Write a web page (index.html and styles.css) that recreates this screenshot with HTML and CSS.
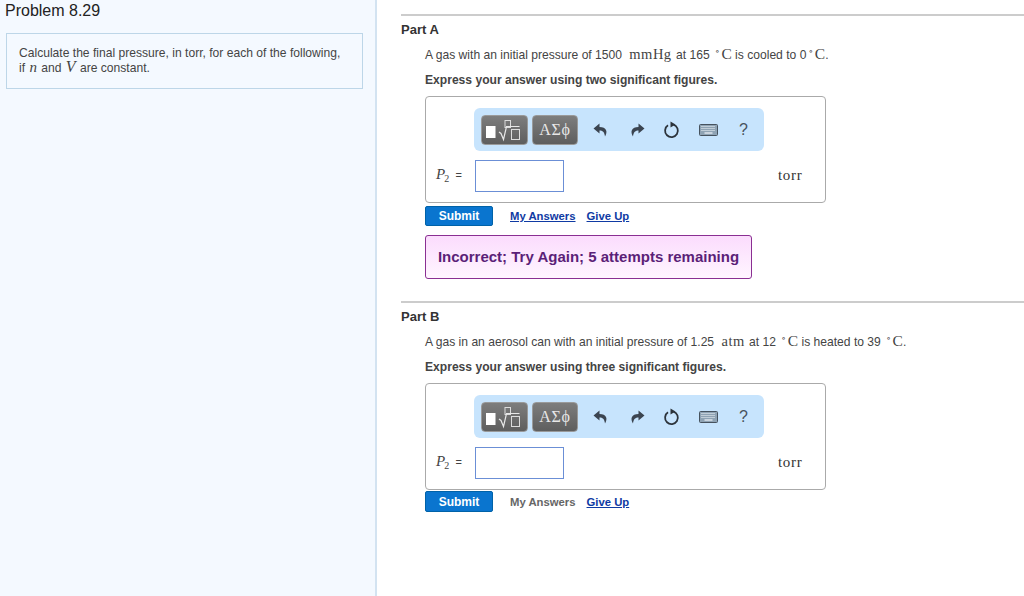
FILE: index.html

```html
<!DOCTYPE html>
<html lang="en">
<head>
  <meta charset="UTF-8" />
  <title>Problem 8.29</title>
  <link rel="stylesheet" href="styles.css">
</head>
<body>

  <div class="side">
    <h1>Problem 8.29</h1>
    <div class="intro">
      Calculate the final pressure, in torr, for each of the following,<br>
      if <span class="math it wide">n</span> and <span class="math it big">V</span> are constant.
    </div>
  </div>

  <div class="main">

    <div class="part part-a">
      <h2>Part A</h2>
      <div class="body">
        <p class="question">A gas with an initial pressure of 1500 <span class="math unit">mmHg</span> at 165 <span class="math deg"><sup>∘</sup>C</span> is cooled to 0<span class="math deg"><sup>∘</sup>C</span>.</p>
        <p class="hint">Express your answer using two significant figures.</p>
        <div class="answer">
          <div class="toolbar">
            <button class="tool tool-tpl" aria-label="Templates">
              <svg width="44" height="24" viewBox="0 0 44 24">
                <rect x="3" y="8" width="9.500" height="12" fill="#fff"/>
                <rect x="22" y="2.500" width="5.500" height="7" fill="none" stroke="#dcdcdc"/>
                <path d="M16 14l2 1.500 2.500 6 3-13h13" fill="none" stroke="#e8e8e8" stroke-width="1.200"/>
                <rect x="28.500" y="11.500" width="8" height="10" fill="none" stroke="#dcdcdc"/>
              </svg>
            </button>
            <button class="tool tool-sym">ΑΣϕ</button>
            <svg class="act act-undo" width="16" height="16" viewBox="0 0 16 16"><path d="M6.500 1.500L0.500 6.500l6 5V8.500c3 0 5 1.500 5.500 6 3-5 1.500-9.500-5.500-9.500z" fill="#3b4450"/></svg>
            <svg class="act act-redo" width="16" height="16" viewBox="0 0 16 16"><path d="M9.500 1.500l6 5-6 5V8.500c-3 0-5 1.500-5.500 6-3-5-1.500-9.500 5.500-9.500z" fill="#3b4450"/></svg>
            <svg class="act act-reset" width="18" height="18" viewBox="0 0 18 18"><path d="M10.500 3.600A6.400 6.400 0 1 1 5 4.300" fill="none" stroke="#2c333b" stroke-width="1.800"/><path d="M7.500 0.500l5 3-5 3z" fill="#2c333b"/></svg>
            <svg class="act act-keys" width="19" height="12" viewBox="0 0 19 12"><rect x="0.500" y="0.500" width="18" height="11" rx="1" fill="#8fa3b4" stroke="#46525e"/><path d="M2.500 2.500h14M2.500 4.500h14M2.500 6.500h14" stroke="#f2f6fa" stroke-dasharray="1 1"/><path d="M5.500 9h8" stroke="#f2f6fa" stroke-width="1.200"/></svg>
            <span class="act-help">?</span>
          </div>
          <div class="entry">
            <span class="label"><span class="math it">P</span><sub class="math">2</sub> <span class="eq">=</span></span>
            <div class="field"></div>
            <span class="math unit-end">torr</span>
          </div>
        </div>
        <div class="actions">
          <button class="submit">Submit</button>
          <a class="link first" href="#">My Answers</a>
          <a class="link" href="#">Give Up</a>
        </div>
        <div class="feedback">Incorrect; Try Again; 5 attempts remaining</div>
      </div>
    </div>

    <div class="part part-b">
      <h2>Part B</h2>
      <div class="body">
        <p class="question">A gas in an aerosol can with an initial pressure of 1.25 <span class="math unit">atm</span> at 12 <span class="math deg"><sup>∘</sup>C</span> is heated to 39 <span class="math deg"><sup>∘</sup>C</span>.</p>
        <p class="hint">Express your answer using three significant figures.</p>
        <div class="answer">
          <div class="toolbar">
            <button class="tool tool-tpl" aria-label="Templates">
              <svg width="44" height="24" viewBox="0 0 44 24">
                <rect x="3" y="8" width="9.500" height="12" fill="#fff"/>
                <rect x="22" y="2.500" width="5.500" height="7" fill="none" stroke="#dcdcdc"/>
                <path d="M16 14l2 1.500 2.500 6 3-13h13" fill="none" stroke="#e8e8e8" stroke-width="1.200"/>
                <rect x="28.500" y="11.500" width="8" height="10" fill="none" stroke="#dcdcdc"/>
              </svg>
            </button>
            <button class="tool tool-sym">ΑΣϕ</button>
            <svg class="act act-undo" width="16" height="16" viewBox="0 0 16 16"><path d="M6.500 1.500L0.500 6.500l6 5V8.500c3 0 5 1.500 5.500 6 3-5 1.500-9.500-5.500-9.500z" fill="#3b4450"/></svg>
            <svg class="act act-redo" width="16" height="16" viewBox="0 0 16 16"><path d="M9.500 1.500l6 5-6 5V8.500c-3 0-5 1.500-5.500 6-3-5-1.500-9.500 5.500-9.500z" fill="#3b4450"/></svg>
            <svg class="act act-reset" width="18" height="18" viewBox="0 0 18 18"><path d="M10.500 3.600A6.400 6.400 0 1 1 5 4.300" fill="none" stroke="#2c333b" stroke-width="1.800"/><path d="M7.500 0.500l5 3-5 3z" fill="#2c333b"/></svg>
            <svg class="act act-keys" width="19" height="12" viewBox="0 0 19 12"><rect x="0.500" y="0.500" width="18" height="11" rx="1" fill="#8fa3b4" stroke="#46525e"/><path d="M2.500 2.500h14M2.500 4.500h14M2.500 6.500h14" stroke="#f2f6fa" stroke-dasharray="1 1"/><path d="M5.500 9h8" stroke="#f2f6fa" stroke-width="1.200"/></svg>
            <span class="act-help">?</span>
          </div>
          <div class="entry">
            <span class="label"><span class="math it">P</span><sub class="math">2</sub> <span class="eq">=</span></span>
            <div class="field"></div>
            <span class="math unit-end">torr</span>
          </div>
        </div>
        <div class="actions">
          <button class="submit">Submit</button>
          <span class="link first off">My Answers</span>
          <a class="link" href="#">Give Up</a>
        </div>
      </div>
    </div>

  </div>

</body>
</html>
```

FILE: styles.css

```css
html, body { height: 100%; }
body { margin: 0; display: flex; height: 596px; overflow: hidden; background: #fff; color: #333; font-family: "Liberation Sans", Arial, sans-serif; font-size: 12.100px; }
p { margin: 0; }

.side { flex: none; width: 357px; background: #f4f9ff; border-right: 2px solid #d3e3f1; padding: 0 12px 0 6px; box-sizing: content-box; }
.side h1 { margin: 0 0 0 -1px; padding-top: 2px; font-size: 16px; font-weight: normal; line-height: 17px; color: #222; }
.intro { margin-top: 14px; height: 38px; padding: 12px 12px 4px 12px; border: 1px solid #bdd6e8; line-height: 15px; color: #444; }
.math { font-family: "Liberation Serif", "DejaVu Serif", serif; line-height: 0; }
.it { font-style: italic; font-size: 15px; }
.big { font-size: 16px; margin: 0 1px; }
.wide { letter-spacing: 1px; margin-left: 1px; }

.main { flex: 1; padding: 14px 0 0 24px; min-width: 0; }
.part { border-top: 2px solid #ccc; }
.part-b { margin-top: 22px; }
.part h2 { margin: 0; padding-top: 6px; font-size: 13px; line-height: 15px; color: #333; }
.body { padding-left: 24px; }
.question { margin-top: 11px; line-height: 15px; color: #444; }
.unit { font-size: 14.500px; letter-spacing: 0.500px; margin: 0 1px 0 4px; }
.deg { font-size: 15.500px; }
.deg sup { font-size: 9px; vertical-align: 5px; line-height: 0; margin: 0 2px; }
.hint { margin-top: 10px; font-weight: bold; line-height: 15px; font-size: 12.100px; color: #444; }

.answer { margin-top: 8px; width: 399px; height: 105px; border: 1px solid #aaa; border-radius: 4px; display: flex; flex-direction: column; }
.toolbar { margin: 11px 0 0 48px; width: 290px; height: 43px; box-sizing: border-box; background: #c7e4fd; border-radius: 6px; display: flex; align-items: center; padding-left: 7px; }
.tool { height: 30px; padding: 0; border: 1px solid #9a9a9a; border-radius: 4px; background: linear-gradient(#7d7d7d, #5e5e5e); color: #e8e8e8; display: flex; align-items: center; justify-content: center; }
.tool-tpl { width: 47px; }
.tool-sym { width: 46px; margin-left: 4px; font-family: "Liberation Serif", "DejaVu Serif", serif; font-size: 16px; letter-spacing: 0.800px; }
.act { flex: none; }
.act-undo { margin-left: 15px; }
.act-redo { margin-left: 20px; }
.act-reset { margin-left: 18px; }
.act-keys { margin-left: 18px; }
.act-help { margin-left: 21px; font-size: 16px; color: #47525e; }

.entry { display: flex; align-items: center; margin-top: 9px; }
.label { width: 49px; padding: 0 0 2px 10px; box-sizing: border-box; color: #444; white-space: nowrap; }
.label sub { font-size: 10px; line-height: 0; vertical-align: -3px; margin-left: -1px; }
.eq { margin-left: 3px; font-size: 11px; }
.field { width: 87px; height: 30px; border: 1px solid #6b8fd6; background: #fff; }
.unit-end { margin-left: 214px; padding-bottom: 2px; font-size: 15px; letter-spacing: 0.700px; color: #333; }

.actions { display: flex; align-items: center; margin-top: 3px; height: 20px; }
.part-b .actions { margin-top: 1px; height: 21px; }
.submit { width: 68px; height: 100%; padding: 0; border: 1px solid #0062a8; border-radius: 2px; background: #0a75cf; color: #fff; font-family: inherit; font-size: 12px; font-weight: bold; }
.link { font-size: 11.300px; font-weight: bold; color: #0f3aa3; margin-left: 11px; text-decoration: underline; }
.link.first { margin-left: 17px; }
.link.off { color: #666; text-decoration: none; }

.feedback { margin-top: 9px; width: 325px; height: 42px; border: 1px solid #8a2f92; border-radius: 3px; background: linear-gradient(#fbdcfd, #fff5ff); color: #5b1f78; font-size: 15px; font-weight: bold; line-height: 42px; text-align: center; }
```
